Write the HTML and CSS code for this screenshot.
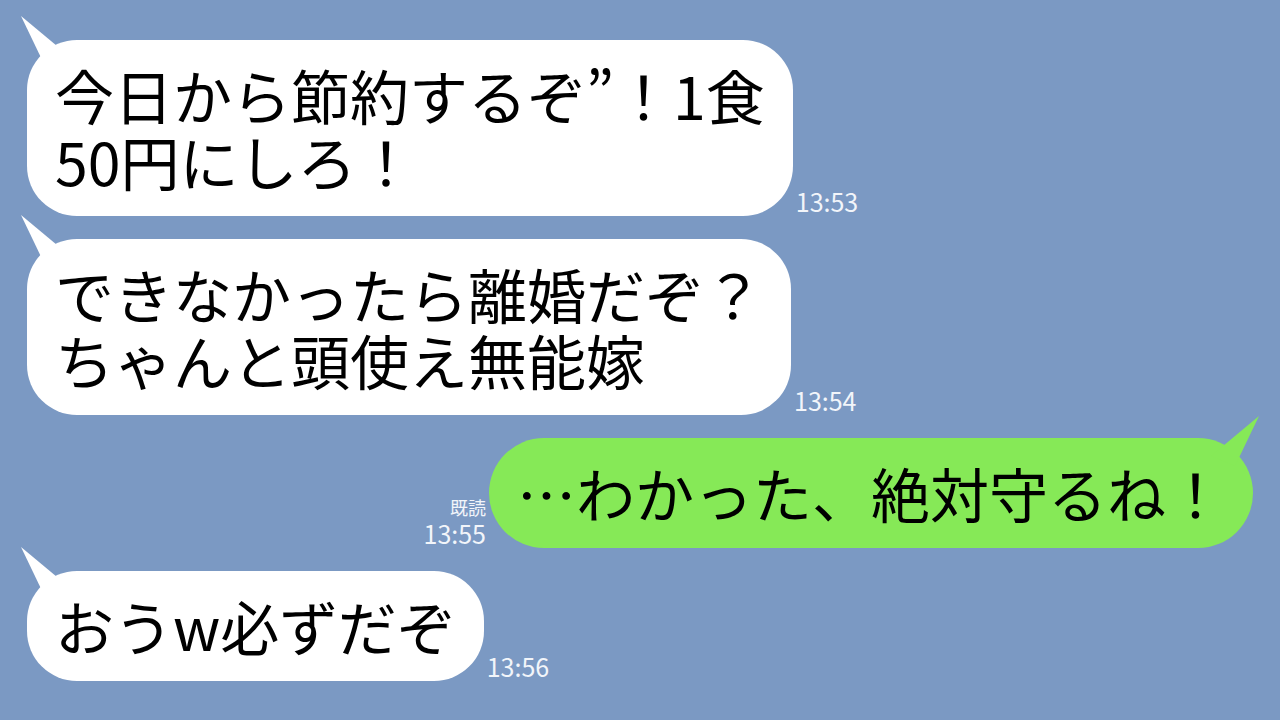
FILE: index.html
```html
<!DOCTYPE html>
<html lang="ja">
<head>
    <meta charset="UTF-8">
    <meta name="viewport" content="width=device-width, initial-scale=1.0">
    <title>トーク</title>
    <link rel="stylesheet" href="styles.css">
</head>
<body>
    <div class="chat">
        <div class="row in">
            <div class="bubble">今日から節約するぞ”！1食<br>50円にしろ！</div>
            <div class="meta"><span class="time">13:53</span></div>
        </div>
        <div class="row in">
            <div class="bubble">できなかったら離婚だぞ？<br>ちゃんと頭使え無能嫁</div>
            <div class="meta"><span class="time">13:54</span></div>
        </div>
        <div class="row out">
            <div class="meta">
                <span class="read">既読</span>
                <span class="time">13:55</span>
            </div>
            <div class="bubble green">…わかった、絶対守るね！</div>
        </div>
        <div class="row in">
            <div class="bubble">おうw必ずだぞ</div>
            <div class="meta"><span class="time">13:56</span></div>
        </div>
    </div>
</body>
</html>
```

FILE: styles.css
```css
body {
    margin: 0;
    width: 1280px;
    height: 720px;
    overflow: hidden;
    background-color: #7b99c3; /* LINE背景 */
    font-family: "Noto Sans CJK JP", "Noto Sans", sans-serif;
}
.chat {
    display: flex;
    flex-direction: column;
    gap: 23px;
    padding: 40px 27px 0 27px;
}
.row {
    display: flex;
    align-items: flex-end;
    gap: 3px;
}
.row.out {
    justify-content: flex-end;
}
.bubble {
    position: relative;
    background-color: #ffffff;
    color: #000;
    font-size: 59px;
    line-height: 66px;
    padding: 22px 28px;
    border-radius: 50px;
    white-space: nowrap;
}
.bubble::before {
    content: "";
    position: absolute;
    left: -6px;
    top: -24px;
    width: 50px;
    height: 50px;
    background-color: inherit;
    clip-path: polygon(0 0, 48px 40px, 24px 50px);
}
.bubble.green {
    background-color: #86e957;
    border-radius: 56px;
}
.bubble.green::before {
    left: auto;
    right: -6px;
    top: -22px;
    clip-path: polygon(50px 0, 2px 40px, 26px 50px);
}
.meta {
    display: flex;
    flex-direction: column;
    align-items: flex-end;
    color: #f2f5fa;
    margin-bottom: 2px;
}
.time {
    font-size: 25px;
    line-height: 25px;
}
.read {
    font-size: 18px;
    line-height: 22px;
    margin-bottom: 3px;
}
```
